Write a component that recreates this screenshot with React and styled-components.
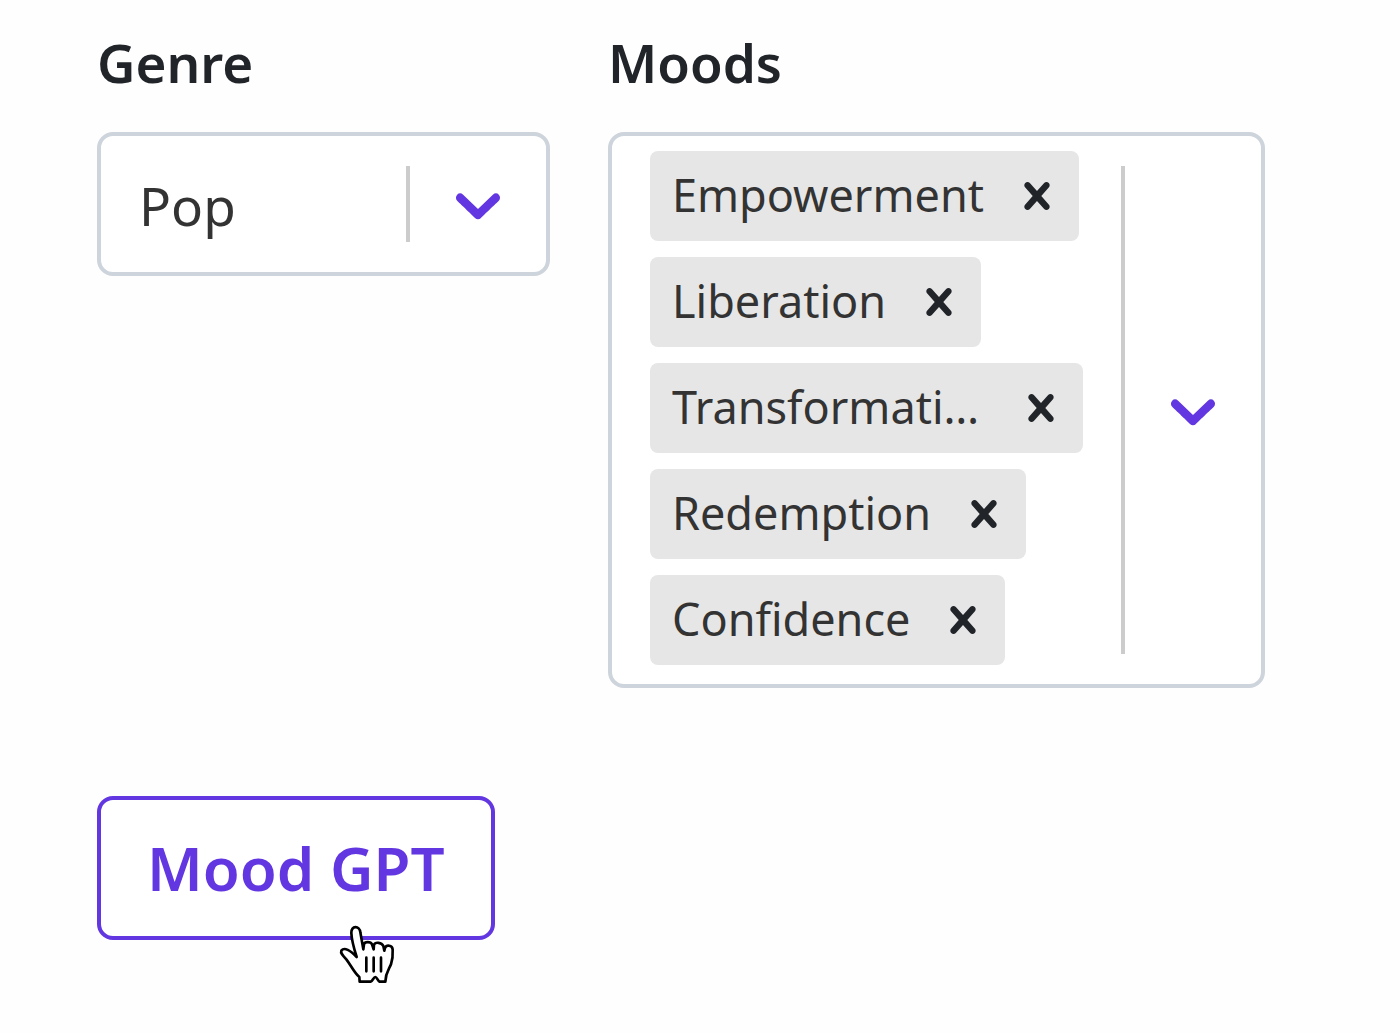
import React, { useState } from "react";
import styled, { createGlobalStyle } from "styled-components";

const colors = {
  primary: "#6236e0",
  heading: "#212529",
  text: "#333333",
  border: "#ced4dc",
  divider: "#cccccc",
  tag: "#e6e6e6",
};

const GENRES = ["Pop", "Rock", "Jazz", "Country"];

const MOODS = [
  "Empowerment",
  "Liberation",
  "Transformation",
  "Redemption",
  "Confidence",
];

const ChevronIcon = () => (
  <Icon size={76} viewBox="0 0 20 20" aria-hidden="true">
    <path d="M4.516 7.548c0.436-0.446 1.043-0.481 1.576 0l3.908 3.747 3.908-3.747c0.533-0.481 1.141-0.446 1.574 0 0.436 0.445 0.408 1.197 0 1.615-0.406 0.418-4.695 4.502-4.695 4.502-0.217 0.223-0.502 0.335-0.787 0.335s-0.57-0.112-0.789-0.335c0 0-4.287-4.084-4.695-4.502s-0.436-1.17 0-1.615z" />
  </Icon>
);

const CrossIcon = () => (
  <Icon size={54} viewBox="0 0 20 20" aria-hidden="true">
    <path d="M14.348 14.849c-0.469 0.469-1.229 0.469-1.697 0l-2.651-3.030-2.651 3.029c-0.469 0.469-1.229 0.469-1.697 0-0.469-0.469-0.469-1.229 0-1.697l2.758-3.15-2.759-3.152c-0.469-0.469-0.469-1.228 0-1.697s1.228-0.469 1.697 0l2.652 3.031 2.651-3.031c0.469-0.469 1.228-0.469 1.697 0s0.469 1.229 0 1.697l-2.758 3.152 2.758 3.15c0.469 0.469 0.469 1.229 0 1.698z" />
  </Icon>
);

const HandPointer = () => (
  <Pointer viewBox="0 0 240 240" aria-hidden="true">
    <path
      d="M95 126C88 104 80 76 79 54C78 31 104 31 106 52L115 103L117 88C119 79 137 79 141 88L146 103L147 89C151 80 170 82 175 93L178 107L180 99C184 89 202 89 203 104C204 122 202 136 198 148C192 163 182 172 181 200L164 200C157 197 156 186 151 186C146 186 143 197 137 200L104 200L103 186C88 174 78 151 64 133C54 122 46 114 49 107C58 95 76 106 95 126Z"
      fill="#ffffff"
    />
    <path d="M124 128V169M146 128V169M168 128V169" />
  </Pointer>
);

export default function App() {
  const [genre, setGenre] = useState("Pop");
  const [moods, setMoods] = useState(MOODS);

  const removeMood = (value) => {
    setMoods(moods.filter((mood) => mood !== value));
  };

  return (
    <>
      <GlobalStyle />
      <Form onSubmit={(e) => e.preventDefault()}>
        <Fields>
          <Field>
            <Label htmlFor="genre">Genre</Label>
            <Control>
              <Select
                id="genre"
                value={genre}
                onChange={(e) => setGenre(e.target.value)}
              >
                {GENRES.map((name) => (
                  <option key={name}>{name}</option>
                ))}
              </Select>
              <Divider />
              <Indicator>
                <ChevronIcon />
              </Indicator>
            </Control>
          </Field>

          <Field>
            <Label htmlFor="moods">Moods</Label>
            <Control>
              <Tags>
                {moods.map((mood) => (
                  <Tag key={mood}>
                    <TagText>{mood}</TagText>
                    <RemoveButton
                      type="button"
                      aria-label={`Remove ${mood}`}
                      onClick={() => removeMood(mood)}
                    >
                      <CrossIcon />
                    </RemoveButton>
                  </Tag>
                ))}
              </Tags>
              <Divider />
              <Indicator as="button" type="button" id="moods">
                <ChevronIcon />
              </Indicator>
            </Control>
          </Field>
        </Fields>

        <SubmitButton type="submit">
          Mood GPT
          <HandPointer />
        </SubmitButton>
      </Form>
    </>
  );
}

const GlobalStyle = createGlobalStyle`
  * {
    box-sizing: border-box;
  }

  body {
    margin: 0;
    background-color: #fefefe;
    color: ${colors.text};
  }

  body,
  button,
  select {
    font-family: "Noto Sans", "Open Sans", sans-serif;
  }
`;

const Form = styled.form`
  padding: 27px 135px 60px 97px;
`;

const Fields = styled.div`
  display: grid;
  grid-template-columns: 453px minmax(0, 1fr);
  align-items: start;
  gap: 58px;
  margin-bottom: 108px;

  @media only screen and (max-width: 1100px) {
    grid-template-columns: minmax(0, 1fr);
  }
`;

const Field = styled.div`
  display: flex;
  flex-direction: column;
`;

const Label = styled.label`
  align-self: flex-start;
  margin-bottom: 33px;
  font-size: 53px;
  font-weight: 600;
  line-height: 72px;
  color: ${colors.heading};
`;

const Control = styled.div`
  display: flex;
  min-height: 144px;
  border: 4px solid ${colors.border};
  border-radius: 16px;
  background-color: white;
`;

const Select = styled.select`
  flex: 1;
  min-width: 0;
  padding: 2px 38px 0;
  border: none;
  background: none;
  appearance: none;
  font-size: 53px;
  color: ${colors.text};
  cursor: pointer;
`;

const Divider = styled.span`
  width: 4px;
  margin: 30px 0;
  background-color: ${colors.divider};
`;

const Indicator = styled.span`
  display: flex;
  align-items: center;
  justify-content: center;
  width: 136px;
  padding: 0;
  border: none;
  background: none;
  color: ${colors.primary};
  cursor: pointer;
`;

const Tags = styled.ul`
  display: flex;
  flex: 1;
  flex-direction: column;
  align-items: flex-start;
  gap: 16px;
  min-width: 0;
  margin: 0;
  padding: 15px 38px 19px;
  list-style: none;
`;

const Tag = styled.li`
  display: flex;
  align-items: center;
  max-width: 100%;
  height: 90px;
  padding: 0 15px 0 22px;
  border-radius: 8px;
  background-color: ${colors.tag};
`;

const TagText = styled.span`
  overflow: hidden;
  padding-bottom: 4px;
  font-size: 45px;
  text-overflow: ellipsis;
  white-space: nowrap;
`;

const RemoveButton = styled.button`
  display: flex;
  flex-shrink: 0;
  margin-left: 26px;
  padding: 0;
  border: none;
  background: none;
  color: ${colors.heading};
  cursor: pointer;
`;

const SubmitButton = styled.button`
  position: relative;
  height: 144px;
  padding: 0 46px;
  border: 4px solid ${colors.primary};
  border-radius: 16px;
  background-color: white;
  font-size: 60px;
  font-weight: 600;
  color: ${colors.primary};
  cursor: pointer;
`;

const Icon = styled.svg`
  width: ${(props) => props.size}px;
  height: ${(props) => props.size}px;
  fill: currentColor;
`;

const Pointer = styled.svg`
  position: absolute;
  top: 115px;
  left: 224px;
  width: 80px;
  height: 80px;
  fill: none;
  stroke: #000000;
  stroke-width: 8;
  stroke-linecap: round;
  stroke-linejoin: round;
`;
